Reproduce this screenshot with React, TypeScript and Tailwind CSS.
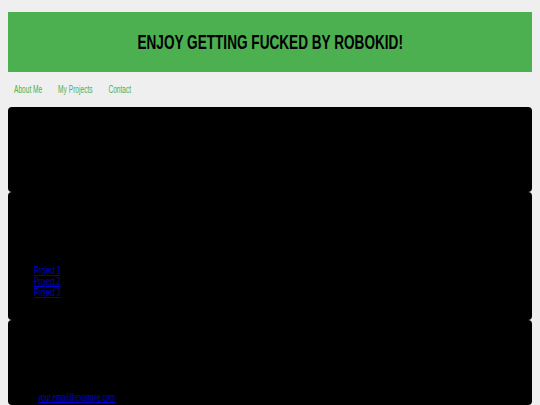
const projects = ['Project 1', 'Project 2', 'Project 3']

const App = () => {
  return (
    <div className="min-h-[405px] bg-[#efefef] pt-3 font-['Liberation_Sans',Arial,sans-serif]">
      {/* Header */}
      <header className="mx-2 flex h-[60px] items-center justify-center bg-[#4caf50]">
        <h1 className="scale-x-[0.68] whitespace-nowrap text-[20px] font-bold leading-none text-black">
          ENJOY GETTING FUCKED BY ROBOKID!
        </h1>
      </header>

      {/* Nav */}
      <nav className="flex h-[35px] items-center px-[14px]">
        <div className="flex origin-left scale-x-[0.66] gap-[24px] whitespace-nowrap text-[10px] text-[#4caf50]">
          <a href="#about">About Me</a>
          <a href="#projects">My Projects</a>
          <a href="#contact">Contact</a>
        </div>
      </nav>

      {/* Sections */}
      <main className="mx-2">
        <section id="about" className="h-[85px] rounded-[4px] bg-black p-[26px]">
          <h2 className="text-[14px] font-bold text-black">About Me</h2>
        </section>

        <section id="projects" className="flex h-[128px] flex-col justify-end rounded-[4px] bg-black px-[26px] pb-[22px]">
          <h2 className="text-[14px] font-bold text-black">My Projects</h2>
          <ul className="origin-left scale-x-[0.67] text-[10px] leading-[11px]">
            {projects.map((p) => (
              <li key={p}>
                <a href="#" className="text-[#0000cc] underline">{p}</a>
              </li>
            ))}
          </ul>
        </section>

        <section id="contact" className="flex h-[85px] flex-col justify-end rounded-[4px] bg-black px-[30px] pb-[2px]">
          <h2 className="text-[14px] font-bold text-black">Contact</h2>
          <p className="origin-left scale-x-[0.67] whitespace-nowrap text-[10px] leading-[11px]">
            <a href="mailto:your.email@example.com" className="text-[#0000cc] underline">your.email@example.com</a>
          </p>
        </section>
      </main>
    </div>
  )
}

export default App
